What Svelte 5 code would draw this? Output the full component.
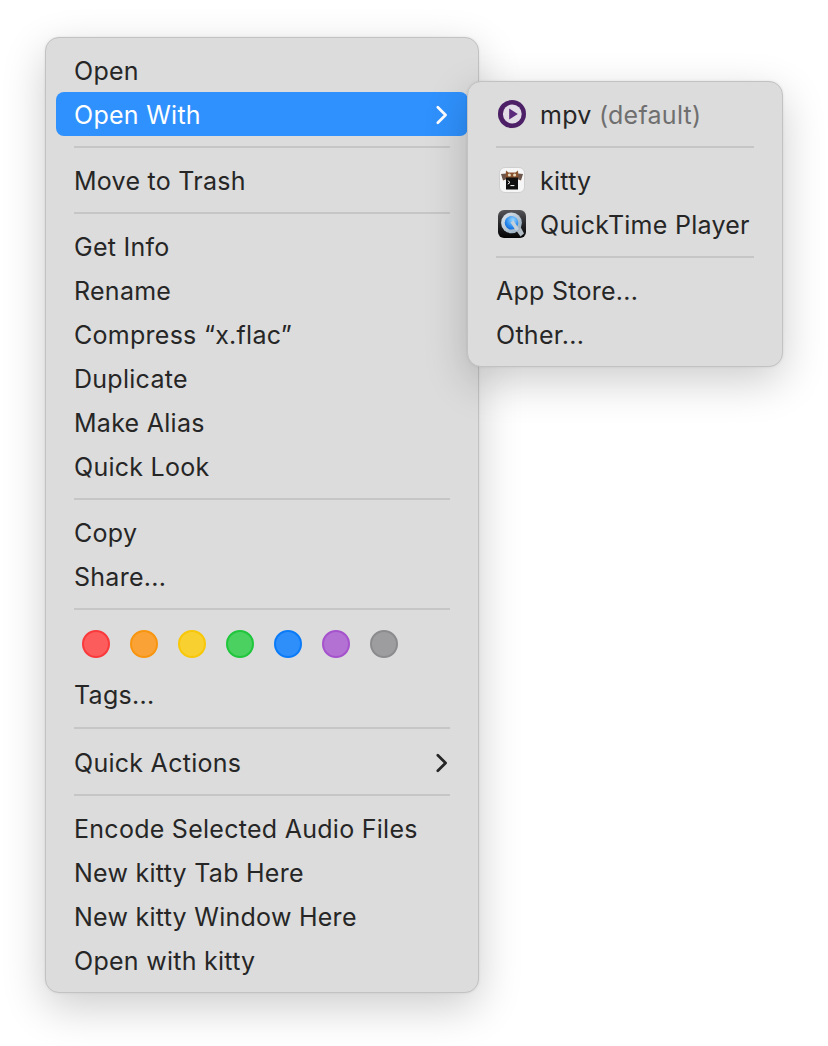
<script lang="ts">
  const tags = [
    { fill: "#fd5c5c", ring: "#f9393b" },
    { fill: "#faa236", ring: "#f8950f" },
    { fill: "#f8d131", ring: "#f7c708" },
    { fill: "#4ad15f", ring: "#1fc63c" },
    { fill: "#2f8ffa", ring: "#0a7bf8" },
    { fill: "#b271d3", ring: "#a552cc" },
    { fill: "#9d9da0", ring: "#8b8b8e" },
  ];

  const afterTags = ["Encode Selected Audio Files", "New kitty Tab Here", "New kitty Window Here", "Open with kitty"];
  const fileActions = ["Get Info", "Rename", "Compress “x.flac”", "Duplicate", "Make Alias", "Quick Look"];
</script>

{#snippet chevron()}
  <svg class="chevron" width="14" height="22" viewBox="0 0 14 22">
    <path d="M2.8 3.2 L10.6 11 L2.8 18.8" fill="none" stroke="currentColor" stroke-width="2.7" stroke-linecap="round" stroke-linejoin="round" />
  </svg>
{/snippet}

<div class="page">
  <div class="menu main">
    <div class="row">Open</div>
    <div class="row active">Open With {@render chevron()}</div>
    <div class="sep"></div>
    <div class="row">Move to Trash</div>
    <div class="sep"></div>
    {#each fileActions as label}
      <div class="row">{label}</div>
    {/each}
    <div class="sep"></div>
    <div class="row">Copy</div>
    <div class="row">Share...</div>
    <div class="sep"></div>
    <div class="tags">
      {#each tags as t}
        <span class="dot" style="background:{t.fill};border-color:{t.ring}"></span>
      {/each}
    </div>
    <div class="row">Tags...</div>
    <div class="sep wide"></div>
    <div class="row">Quick Actions {@render chevron()}</div>
    <div class="sep"></div>
    {#each afterTags as label}
      <div class="row">{label}</div>
    {/each}
  </div>

  <div class="menu sub">
    <div class="row app">
      <svg class="icon" width="32" height="32" viewBox="0 0 32 32">
        <circle cx="16" cy="16.5" r="14" fill="#d0cdd2" />
        <circle cx="16" cy="16" r="14" fill="#4c1f66" />
        <circle cx="16.3" cy="16" r="9.4" fill="#e2dce7" />
        <path d="M13.2 10.6 L21.8 16 L13.2 21.4 Z" fill="#5b2a7c" />
      </svg>
      <span>mpv <em>(default)</em></span>
    </div>
    <div class="sep"></div>
    <div class="row app">
      <svg class="icon" width="32" height="32" viewBox="0 0 32 32">
        <rect x="3.5" y="3.5" width="25" height="25" rx="5.5" fill="#f6f6f6" stroke="#cfcfcf" />
        <path d="M5 10 L10 9.5 L11 15 L7 16.5 Z M27 10 L22 9.5 L21 15 L25 16.5 Z" fill="#6d564c" />
        <path d="M10 6.5 L12.5 8.5 L19.5 8.5 L22 6.5 L22.5 14 L9.5 14 Z" fill="#8a5430" />
        <circle cx="13.4" cy="11" r="1.5" fill="#eadcc0" />
        <circle cx="18.6" cy="11" r="1.5" fill="#eadcc0" />
        <rect x="10" y="13.5" width="12" height="12" fill="#101010" />
        <path d="M11.8 16.6 L14 18.4 L11.8 20.2" fill="none" stroke="#fff" stroke-width="1" />
        <path d="M14.4 21.6 H18.4" stroke="#fff" stroke-width="1" />
      </svg>
      <span>kitty</span>
    </div>
    <div class="row app">
      <svg class="icon" width="32" height="32" viewBox="0 0 32 32">
        <defs>
          <linearGradient id="qt-case" x1="0" y1="0" x2="0" y2="1">
            <stop offset="0" stop-color="#56565a" />
            <stop offset="0.55" stop-color="#232326" />
            <stop offset="1" stop-color="#050506" />
          </linearGradient>
          <linearGradient id="qt-ring" x1="0" y1="0" x2="1" y2="1">
            <stop offset="0" stop-color="#dfe9f2" />
            <stop offset="1" stop-color="#8fa6b8" />
          </linearGradient>
          <radialGradient id="qt-core" cx="0.6" cy="0.3" r="0.8">
            <stop offset="0" stop-color="#9ad8ff" />
            <stop offset="0.6" stop-color="#2a8cf0" />
            <stop offset="1" stop-color="#0b5fd0" />
          </radialGradient>
        </defs>
        <rect x="2" y="2" width="28" height="28" rx="6" fill="url(#qt-case)" />
        <path d="M17 18 L22 14 L28 25.5 L24.5 28.5 Z" fill="#b3bdc5" />
        <circle cx="15.5" cy="14.8" r="10.4" fill="url(#qt-ring)" />
        <circle cx="15.5" cy="14.8" r="6.8" fill="url(#qt-core)" />
        <path d="M14.5 14.5 L17.5 12.5 L23 21 L20 23 Z" fill="#c4d0da" />
      </svg>
      <span>QuickTime Player</span>
    </div>
    <div class="sep"></div>
    <div class="row">App Store...</div>
    <div class="row">Other...</div>
  </div>
</div>

<style>
  :global(body) {
    background: #fff;
    font-family: Inter, "Liberation Sans", sans-serif;
  }

  .page {
    position: relative;
    height: 1046px;
    overflow: hidden;
    padding: 37px 0 0 45px;
    box-sizing: border-box;
  }

  .menu {
    box-sizing: border-box;
    padding: 10px;
    background: #dcdcdc;
    border: 1px solid #c2c2c2;
    border-radius: 14px;
    box-shadow: 0 14px 44px rgba(0, 0, 0, 0.2), 0 0 3px rgba(0, 0, 0, 0.08);
    color: #262626;
    font-size: 25px;
    letter-spacing: 0.27px;
  }

  .main {
    width: 434px;
    height: 956px;
  }

  .sub {
    position: absolute;
    top: 81px;
    left: 467px;
    width: 316px;
    height: 286px;
  }

  .row {
    display: flex;
    align-items: center;
    justify-content: space-between;
    box-sizing: border-box;
    height: 44px;
    padding: 2px 18px 0;
    border-radius: 8px;
    white-space: nowrap;
  }

  .row.active {
    background: #2f91fd;
    color: #fff;
  }

  .row.app {
    justify-content: flex-start;
    gap: 12px;
  }

  em {
    font-style: normal;
    color: #6f6f6f;
  }

  .chevron {
    margin: -1px 1px 0 0;
  }

  .icon {
    flex: none;
    margin-top: -2px;
  }

  .sep {
    height: 2px;
    margin: 10px 18px;
    background: #c6c6c6;
  }

  .sep.wide {
    margin: 11px 18px;
  }

  .tags {
    display: flex;
    gap: 20px;
    height: 52px;
    padding: 10px 0 0 26px;
    box-sizing: border-box;
  }

  .dot {
    box-sizing: border-box;
    width: 28px;
    height: 28px;
    border: 2px solid;
    border-radius: 50%;
  }
</style>
